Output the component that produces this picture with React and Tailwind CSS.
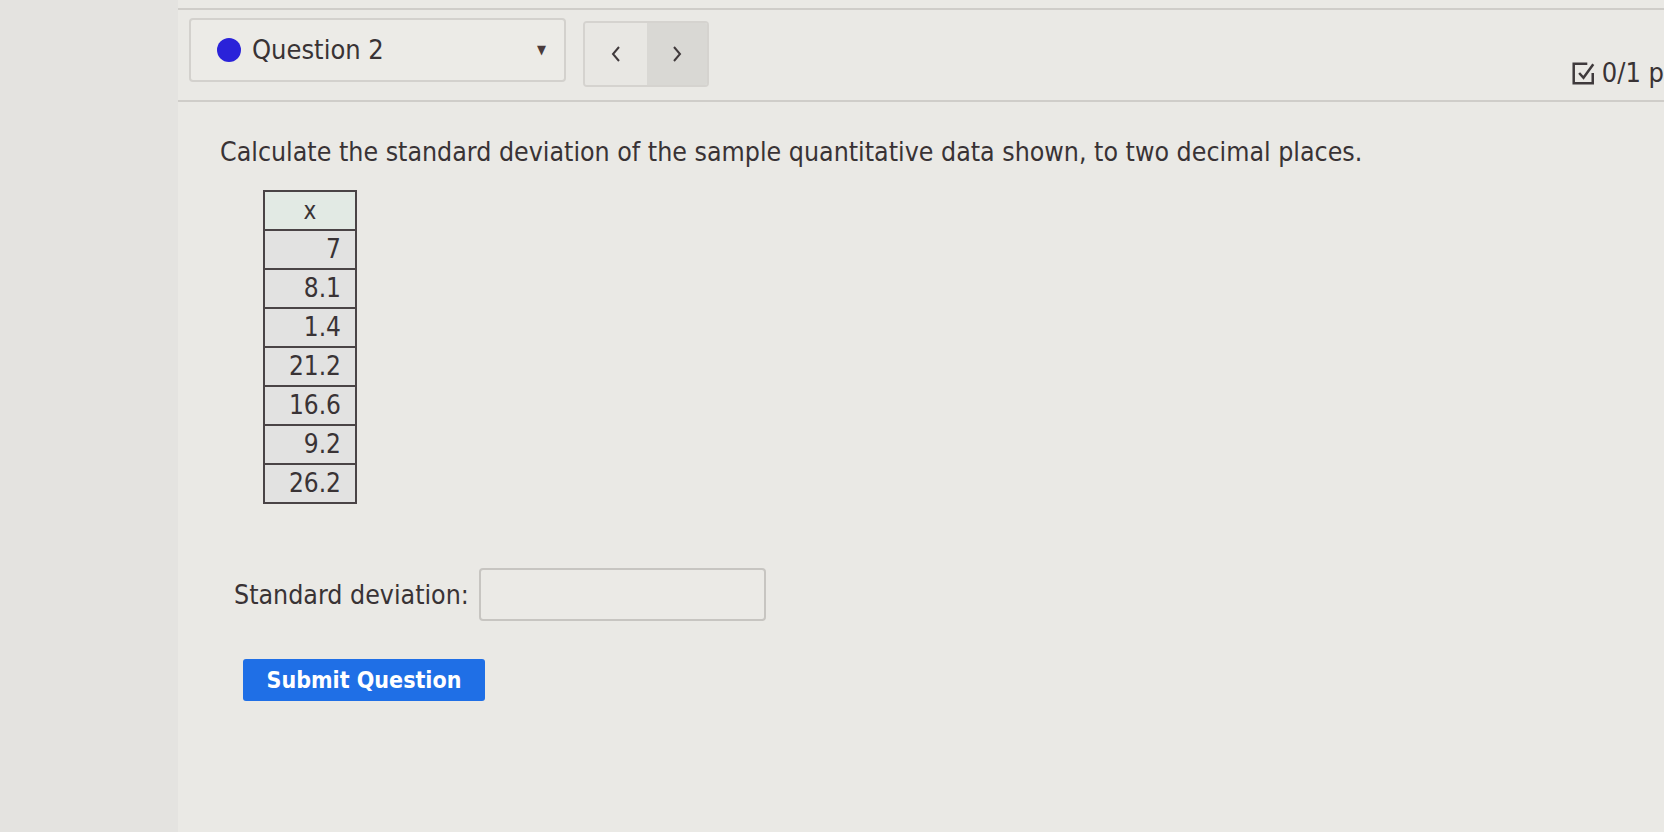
export default function App() {
  const rows = ["7", "8.1", "1.4", "21.2", "16.6", "9.2", "26.2"];
  const font = { fontFamily: '"DejaVu Sans Condensed", "DejaVu Sans", sans-serif' };
  return (
    <div className="flex h-[832px] w-full overflow-hidden bg-[#eae9e5] text-[#393335]" style={font}>
      <div className="w-[178px] shrink-0 bg-[#e4e3e0]" />
      <div className="flex-1 flex flex-col">
        <div className="mt-[8px] h-[2px] bg-[#cfcdc9]" />
        <div className="flex items-start pl-[11px] pr-0">
          <div className="mt-[8px] flex h-[64px] w-[377px] items-center rounded-[4px] border-2 border-[#d3d1cd] bg-[#ecebe7] pl-[26px] pr-[18px]">
            <span className="h-[24px] w-[24px] rounded-full bg-[#2a22d9]" />
            <span className="ml-[11px] text-[27px]">Question 2</span>
            <span className="ml-auto text-[13px] text-[#4a3b3b]">▼</span>
          </div>
          <div className="ml-[17px] mt-[11px] flex h-[66px] w-[126px] overflow-hidden rounded-[4px] border-2 border-[#d5d3cf]">
            <div className="flex w-[62px] items-center justify-center bg-[#e8e7e3]">
              <svg width="14" height="22" viewBox="0 0 14 22" fill="none" stroke="#403a3c" strokeWidth="2">
                <path d="M10 4L4 11l6 7" />
              </svg>
            </div>
            <div className="flex flex-1 items-center justify-center bg-[#d9d8d4]">
              <svg width="14" height="22" viewBox="0 0 14 22" fill="none" stroke="#403a3c" strokeWidth="2">
                <path d="M4 4l6 7-6 7" />
              </svg>
            </div>
          </div>
          <div className="ml-auto mt-[43px] flex items-center gap-[6px] text-[27px]">
            <svg width="25" height="25" viewBox="0 0 23 23" fill="none" stroke="#3f3a3c" strokeWidth="2.3">
              <path d="M15 2.5H2.5v18h17.5V11" />
              <path d="M7.5 11l4 4.5L20.5 3" />
            </svg>
            <span className="whitespace-nowrap">0/1 p</span>
          </div>
        </div>
        <div className="mt-[6px] h-[2px] bg-[#cfcdc9]" />
        <div className="pl-[42px] pt-[30px] text-[26.5px]">
          Calculate the standard deviation of the sample quantitative data shown, to two decimal places.
        </div>
        <div className="ml-[85px] mt-[19px] w-[94px] text-[26px]">
          <div className="flex h-[41px] items-center justify-center border-2 border-[#4a4446] bg-[#e2eae4] text-[24px]">x</div>
          {rows.map((r) => (
            <div key={r} className="-mt-[2px] flex h-[41px] items-center justify-end border-2 border-[#4a4446] bg-[#e2e2e1] pr-[14px]">
              {r}
            </div>
          ))}
        </div>
        <div className="ml-[56px] mt-[64px] flex items-center gap-[10px]">
          <span className="text-[26.5px]">Standard deviation:</span>
          <div className="h-[53px] w-[287px] rounded-[4px] border-2 border-[#c7c5c1] bg-[#ebeae6]" />
        </div>
        <div className="ml-[65px] mt-[38px] flex h-[42px] w-[242px] items-center justify-center rounded-[3px] bg-[#1f6fe6] text-[23px] font-bold text-white">
          Submit Question
        </div>
      </div>
    </div>
  );
}
